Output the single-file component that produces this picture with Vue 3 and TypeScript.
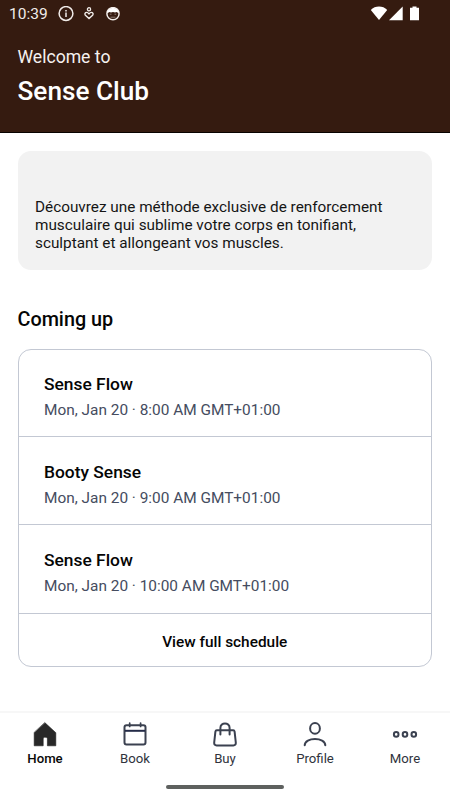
<script setup lang="ts">
interface ClassItem {
  title: string
  time: string
}

interface Tab {
  id: string
  label: string
}

const classes: ClassItem[] = [
  { title: 'Sense Flow', time: 'Mon, Jan 20 · 8:00 AM GMT+01:00' },
  { title: 'Booty Sense', time: 'Mon, Jan 20 · 9:00 AM GMT+01:00' },
  { title: 'Sense Flow', time: 'Mon, Jan 20 · 10:00 AM GMT+01:00' },
]

const tabs: Tab[] = [
  { id: 'home', label: 'Home' },
  { id: 'book', label: 'Book' },
  { id: 'buy', label: 'Buy' },
  { id: 'profile', label: 'Profile' },
  { id: 'more', label: 'More' },
]
const active = 'home'
</script>

<template>
  <div class="screen">
    <header class="header">
      <div class="status">
        <span class="clock">10:39</span>
        <svg class="info" width="16" height="16" viewBox="0 0 16 16">
          <circle cx="8" cy="7.500" r="6.900" fill="none" stroke="#f1ece9" stroke-width="1.500" />
          <path d="M8 6.500v4.500M8 3.900v1.500" stroke="#f1ece9" stroke-width="1.500" />
        </svg>
        <svg class="care" width="10" height="14" viewBox="0 0 10 14">
          <circle cx="5" cy="2.300" r="1.600" fill="none" stroke="#f1ece9" stroke-width="1.300" />
          <path d="M5 11.600 1.400 8.200C.4 6.900 1.200 5.400 2.600 5.400c1 0 1.700.6 2.400 1.500.7-.9 1.400-1.500 2.400-1.500 1.400 0 2.200 1.500 1.200 2.800Z" fill="none" stroke="#f1ece9" stroke-width="1.400" />
        </svg>
        <svg class="face" width="14" height="14" viewBox="0 0 14 14">
          <circle cx="7" cy="6.700" r="6.100" fill="#351b10" stroke="#f1ece9" stroke-width="1.500" />
          <path d="M1.200 6.200C1.400 3 4 .9 7 .9s5.600 2.100 5.800 5.300L10.500 4.900 9 5.600 7 5.100 5 5.600 3.500 4.900Z" fill="#fff" />
          <path d="M3.800 7.200h1.700M8.500 7.200h1.700M4.500 10.200h5" stroke="#8d7b73" stroke-width="1" />
        </svg>
        <span class="spacer"></span>
        <svg class="system" width="52" height="16" viewBox="0 0 52 16">
          <path d="M.8 3.900C5-.7 13-.7 17.200 3.900L9 14Z" fill="#fff" />
          <path d="M32.700.5V14.200H19Z" fill="#fff" />
          <path d="M42.500.5h4v1.300H49V14.200h-9V1.800h2.500Z" fill="#fff" />
        </svg>
      </div>
      <p class="welcome">Welcome to</p>
      <h1 class="club">Sense Club</h1>
    </header>

    <main class="content">
      <section class="about">
        Découvrez une méthode exclusive de renforcement<br />
        musculaire qui sublime votre corps en tonifiant,<br />
        sculptant et allongeant vos muscles.
      </section>

      <h2 class="heading">Coming up</h2>

      <section class="schedule">
        <article v-for="(item, i) in classes" :key="i" class="row">
          <h3>{{ item.title }}</h3>
          <p>{{ item.time }}</p>
        </article>
        <button class="full" type="button">View full schedule</button>
      </section>
    </main>

    <nav class="tabs">
      <a v-for="tab in tabs" :key="tab.id" class="tab" :class="{ active: tab.id === active }">
        <svg width="28" height="28" viewBox="0 0 28 28" fill="none" stroke="#3b4150" stroke-width="2" stroke-linecap="round" stroke-linejoin="round">
          <path v-if="tab.id === 'home'" d="M14 2.800 24.800 12.700V25.800H16.400V18.800Q16.400 17.300 15.200 17.300H13.400Q12.200 17.300 12.200 18.800V25.800H3.200V12.700Z" fill="#282828" stroke="#1c1c1c" stroke-width=".6" />
          <template v-else-if="tab.id === 'book'">
            <rect x="3.500" y="5.300" width="21" height="19.200" rx="2" />
            <path d="M4 10.800H24" stroke="#242b48" stroke-linecap="butt" />
            <path d="M8.700 3V6.500M19.600 3V6.500" stroke-width="1.700" />
          </template>
          <template v-else-if="tab.id === 'buy'">
            <path d="M5.800 10.200H22.200Q23.400 10.200 23.600 11.600L24.800 22.500Q25 25.400 22.400 25.400H5.600Q3 25.400 3.200 22.500L4.400 11.600Q4.600 10.200 5.800 10.200Z" />
            <path d="M9.400 14.500V8C9.400 1.900 18.600 1.900 18.600 8V14.500" />
          </template>
          <template v-else-if="tab.id === 'profile'">
            <ellipse cx="14" cy="8.400" rx="4.900" ry="5.300" />
            <path d="M3.700 25.300C3.700 16.800 24.300 16.800 24.300 25.300" />
          </template>
          <template v-else>
            <circle cx="5.200" cy="14.400" r="2.300" />
            <circle cx="14" cy="14.400" r="2.300" />
            <circle cx="22.800" cy="14.400" r="2.300" />
          </template>
        </svg>
        <span>{{ tab.label }}</span>
      </a>
    </nav>
    <div class="gesture"><i></i></div>
  </div>
</template>

<style>
body {
  background: #fff;
}
</style>

<style scoped>
.screen {
  width: 450px;
  height: 800px;
  display: flex;
  flex-direction: column;
  overflow: hidden;
  background: #fff;
  color: #050505;
  font-family: Roboto, "Liberation Sans", sans-serif;
}
h1, h2, h3, p {
  margin: 0;
}
.header {
  box-sizing: border-box;
  height: 133px;
  flex: none;
  background: #351b10;
  border-bottom: 1px solid #080301;
  color: #fff;
}
.status {
  height: 27px;
  display: flex;
  align-items: center;
  padding: 0 28px 0 9px;
}
.clock {
  width: 48.500px;
  padding-top: 2px;
  font-size: 15.500px;
  line-height: 25px;
  color: #f1ece9;
}
.care {
  margin-left: 10.500px;
}
.face {
  margin-left: 12px;
}
.spacer {
  flex: 1;
}
.welcome {
  padding: 19px 17.500px 0;
  font-size: 17.600px;
  line-height: 22px;
  color: #f5f1ef;
}
.club {
  padding: 7px 17.500px 0;
  font-size: 26.200px;
  font-weight: 500;
  line-height: 32px;
}
.content {
  flex: 1;
  padding: 18px 18px 0 17.500px;
}
.about {
  box-sizing: border-box;
  height: 119px;
  padding: 46.800px 17.500px 0;
  border-radius: 13px;
  background: #f2f2f2;
  font-size: 15.320px;
  line-height: 18px;
  color: #151515;
  white-space: nowrap;
}
.heading {
  margin: 37px 0 17px;
  font-size: 19.800px;
  font-weight: 500;
  line-height: 25px;
}
.schedule {
  box-sizing: border-box;
  height: 318px;
  display: flex;
  flex-direction: column;
  border: 1px solid #c3c8d3;
  border-radius: 13px;
}
.row {
  box-sizing: border-box;
  height: 89px;
  flex: none;
  padding: 24px 25.500px 0;
  border-bottom: 1px solid #c3c8d3;
}
.row:first-child {
  height: 87px;
  padding-top: 23px;
}
.row:nth-child(2) {
  height: 88px;
}
.row h3 {
  font-size: 17.400px;
  font-weight: 500;
  line-height: 22px;
}
.row p {
  margin-top: 5px;
  font-size: 15.400px;
  line-height: 20px;
  color: #454c60;
}
.full {
  flex: 1;
  padding: 3px 0 0;
  border: 0;
  background: none;
  color: #050505;
  font: 500 15.400px/20px Roboto, "Liberation Sans", sans-serif;
}
.tabs {
  box-sizing: border-box;
  height: 67px;
  flex: none;
  display: flex;
  border-top: 2px solid #f7f7f7;
}
.tab {
  width: 90px;
  display: flex;
  flex-direction: column;
  align-items: center;
  padding-top: 7px;
  font-size: 13.200px;
  line-height: 18px;
  color: #30333c;
}
.tab span {
  margin-top: 1.500px;
}
.tab.active {
  color: #080808;
  font-weight: 500;
}
.gesture {
  height: 22px;
  flex: none;
  display: flex;
  justify-content: center;
  align-items: flex-start;
}
.gesture i {
  width: 118px;
  height: 4px;
  margin-top: 7px;
  border-radius: 2px;
  background: #5e615f;
}
</style>
